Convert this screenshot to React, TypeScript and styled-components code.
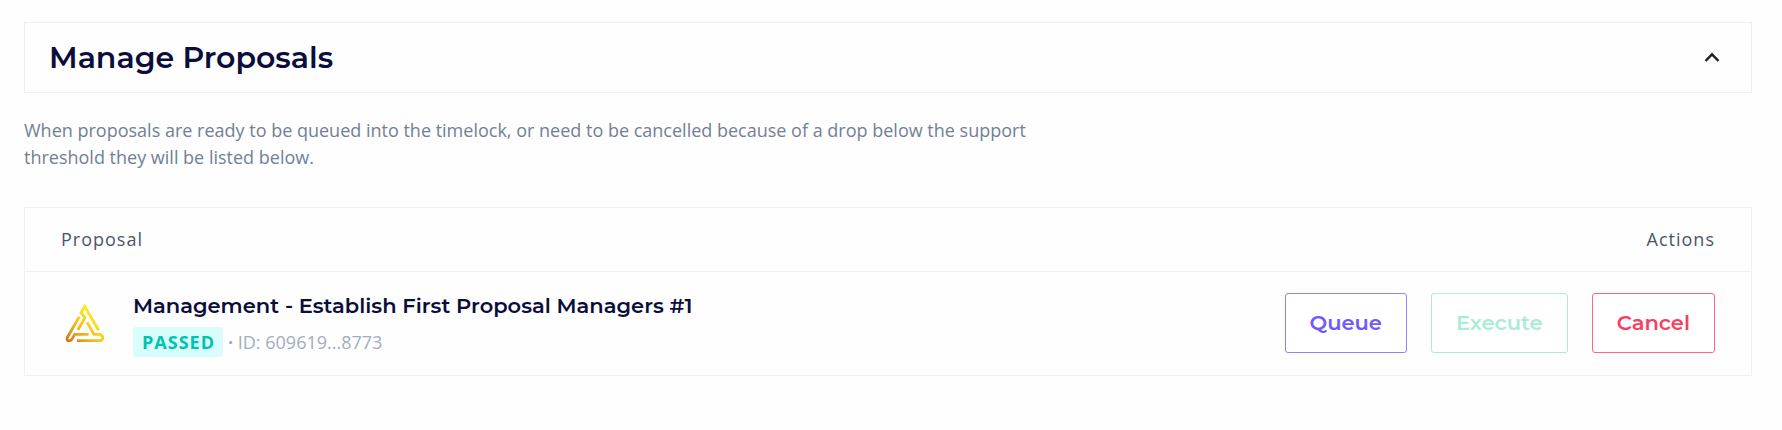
import React, { useState } from "react";
import styled, { createGlobalStyle } from "styled-components";

const body = `"Open Sans", "Noto Sans", sans-serif`;
const display = `Montserrat, Inter, sans-serif`;

const GlobalStyle = createGlobalStyle`
  *, *::before, *::after { box-sizing: border-box; }
  body { margin: 0; background: #fefefe; font-family: ${body}; }
`;

const Page = styled.main`
  padding: 22px 30px 24px 24px;
`;

const HeadingBar = styled.header`
  display: flex;
  align-items: center;
  justify-content: space-between;
  padding: 16px 24px;
  border: 1px solid #e9f0f5;
`;

const Title = styled.h1`
  margin: 0;
  font: 600 30px/37px ${display};
  color: #0b0d3b;
`;

const Toggle = styled.button`
  display: flex;
  padding: 3px;
  border: 0;
  background: none;
  color: #1a202c;
  cursor: pointer;
`;

const Intro = styled.p`
  max-width: 1024px;
  margin: 24px 0 36px;
  font-size: 18px;
  line-height: 27px;
  color: #718096;
`;

const Table = styled.table`
  width: 100%;
  border: 1px solid #eef0f3;
  border-spacing: 0;
`;

const HeadCell = styled.th<{ $end?: boolean }>`
  padding: 18px 36px;
  border-bottom: 1px solid #eef0f3;
  font-size: 18px;
  font-weight: 400;
  line-height: 27px;
  letter-spacing: 1px;
  text-align: ${(p) => (p.$end ? "right" : "left")};
  color: #4a5568;
`;

const Cell = styled.td`
  padding: 17px 36px 18px;
`;

const Proposal = styled.div`
  display: flex;
  align-items: center;
  gap: 24px;
`;

const LogoBox = styled.span`
  display: flex;
  justify-content: center;
  width: 48px;
`;

const ProposalName = styled.h2`
  margin: 2px 0 7px;
  font: 600 21px/29px ${display};
  color: #0b0d3b;
`;

const Meta = styled.div`
  display: flex;
  align-items: center;
  gap: 5px;
  font-size: 18px;
  line-height: 30px;
  color: #a0aec0;
`;

const Status = styled.span`
  padding: 0 8px 0 9px;
  border-radius: 3px;
  background: #d8fdfb;
  color: #00c2b2;
  font-weight: 700;
  letter-spacing: 1px;
`;

const Actions = styled.div`
  display: flex;
  justify-content: flex-end;
  gap: 24px;
`;

const ActionButton = styled.button<{ $color: string; $line: string }>`
  padding: 16px 24px;
  border: 1px solid ${(p) => p.$line};
  border-radius: 3px;
  background: #fff;
  font: 600 21px/26px ${display};
  color: ${(p) => p.$color};
  cursor: pointer;

  &:disabled { cursor: not-allowed; }
`;

function Chevron({ open }: { open: boolean }) {
  return (
    <svg width="24" height="24" viewBox="0 0 24 24" fill="none" stroke="currentColor" strokeWidth="2.4" aria-hidden="true">
      <path d={open ? "M5.5 15 12 8.3 18.5 15" : "M5.5 9 12 15.7 18.5 9"} />
    </svg>
  );
}

function Logo() {
  return (
    <svg width="40" height="40" viewBox="0 0 120 120" fill="none" aria-hidden="true">
      <defs>
        <linearGradient id="gold" gradientUnits="userSpaceOnUse" x1="10" y1="115" x2="90" y2="30">
          <stop offset="0" stopColor="#d27a1b" />
          <stop offset="0.5" stopColor="#f4c020" />
          <stop offset="1" stopColor="#fff01c" />
        </linearGradient>
      </defs>
      <g stroke="url(#gold)" strokeWidth="8.5">
        <path d="M101 82 59 10 48 29 60 44 39 80" />
        <path d="M43 41 6 105Q5 114 14 113Q19 113 21 108L29 94H71" />
        <path d="M66 58 87 94H105Q115 98 113 107Q111 113 104 113H36" />
      </g>
    </svg>
  );
}

export default function App() {
  const [open, setOpen] = useState(true);
  return (
    <>
      <GlobalStyle />
      <Page>
        <HeadingBar>
          <Title>Manage Proposals</Title>
          <Toggle type="button" aria-label="Toggle proposals" aria-expanded={open} onClick={() => setOpen(!open)}>
            <Chevron open={open} />
          </Toggle>
        </HeadingBar>
        {open && (
          <>
            <Intro>
              When proposals are ready to be queued into the timelock, or need to be cancelled because of a drop
              below the support threshold they will be listed below.
            </Intro>
            <Table>
              <thead>
                <tr>
                  <HeadCell scope="col">Proposal</HeadCell>
                  <HeadCell scope="col" $end>Actions</HeadCell>
                </tr>
              </thead>
              <tbody>
                <tr>
                  <Cell>
                    <Proposal>
                      <LogoBox><Logo /></LogoBox>
                      <div>
                        <ProposalName>Management - Establish First Proposal Managers #1</ProposalName>
                        <Meta>
                          <Status>PASSED</Status>
                          <span><b>·</b> ID: 609619...8773</span>
                        </Meta>
                      </div>
                    </Proposal>
                  </Cell>
                  <Cell>
                    <Actions>
                      <ActionButton type="button" $color="#7158ff" $line="#9380fa">Queue</ActionButton>
                      <ActionButton type="button" disabled $color="#a9ecd8" $line="#a9ecd8">Execute</ActionButton>
                      <ActionButton type="button" $color="#fa3e5f" $line="#fb6880">Cancel</ActionButton>
                    </Actions>
                  </Cell>
                </tr>
              </tbody>
            </Table>
          </>
        )}
      </Page>
    </>
  );
}
